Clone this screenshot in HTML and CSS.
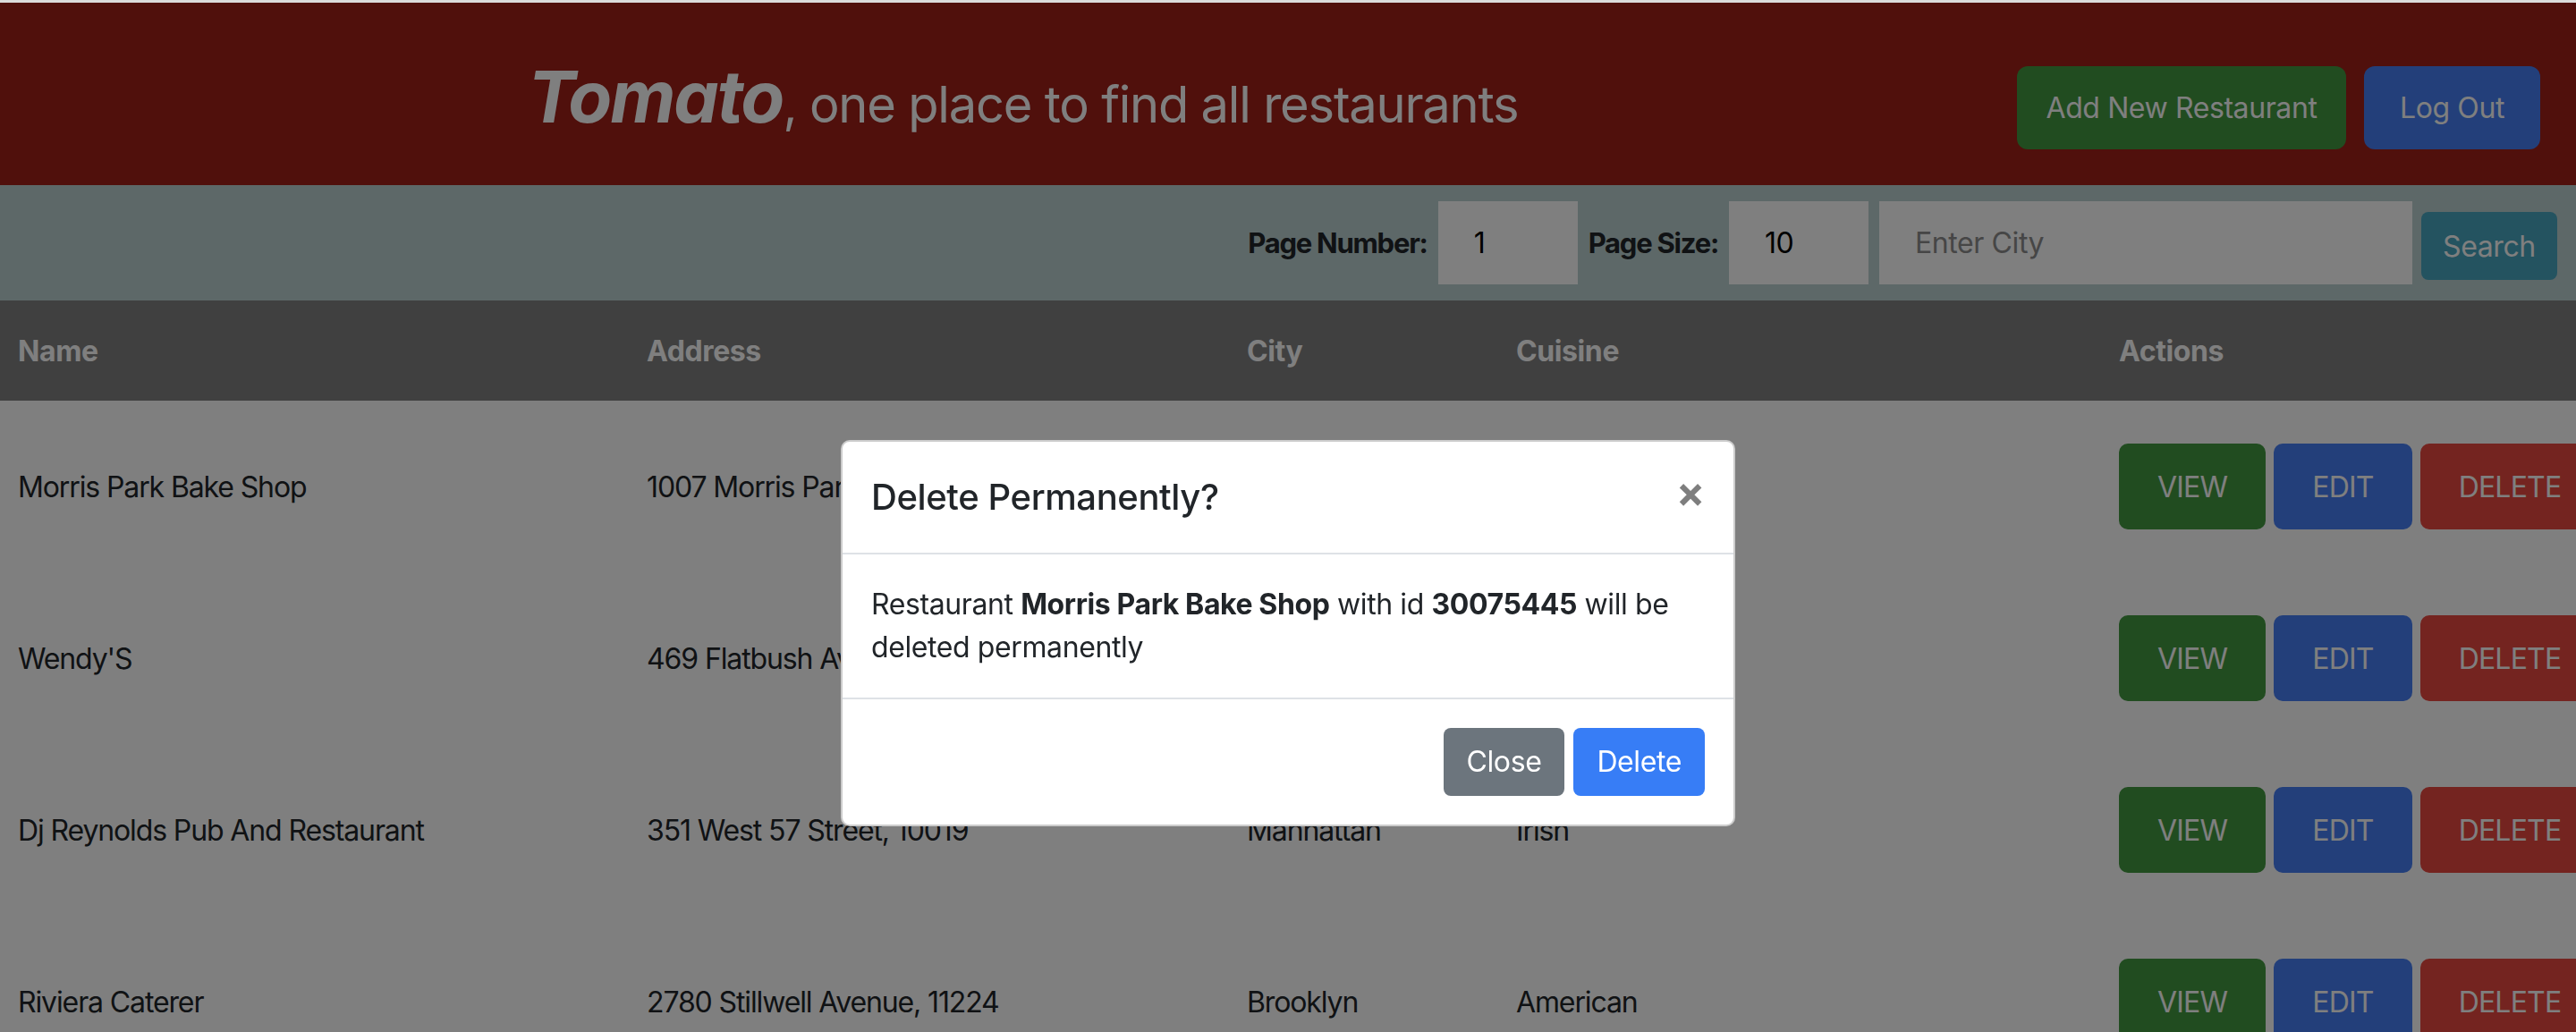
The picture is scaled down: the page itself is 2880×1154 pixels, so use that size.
FILE: index.html
```html
<!DOCTYPE html>
<html lang="en">
<head>
<meta charset="utf-8">
<title>Tomato</title>
<link rel="stylesheet" href="styles.css">
</head>
<body>
<div class="chrome-strip"></div>
<header class="app-header">
  <h1 class="brand"><span class="brand-name">Tomato</span><span class="brand-tag">, one place to find all restaurants</span></h1>
  <div class="header-actions">
    <button class="hbtn hbtn-add">Add New Restaurant</button>
    <button class="hbtn hbtn-logout">Log Out</button>
  </div>
</header>
<form class="filter-bar">
  <label class="filter-label">Page Number:</label>
  <input class="filter-input filter-small" type="text" value="1">
  <label class="filter-label">Page Size:</label>
  <input class="filter-input filter-small" type="text" value="10">
  <input class="filter-input filter-city" type="text" placeholder="Enter City">
  <button type="button" class="search-btn">Search</button>
</form>
<table class="rest-table">
  <colgroup>
    <col class="col-name"><col class="col-address"><col class="col-city"><col class="col-cuisine"><col class="col-actions">
  </colgroup>
  <thead>
    <tr><th>Name</th><th>Address</th><th>City</th><th>Cuisine</th><th>Actions</th></tr>
  </thead>
  <tbody>
    <tr>
      <td>Morris Park Bake Shop</td><td>1007 Morris Park Ave, 10462</td><td>Bronx</td><td>Bakery</td>
      <td><div class="actions"><button class="rbtn rbtn-view">View</button><button class="rbtn rbtn-edit">Edit</button><button class="rbtn rbtn-delete">Delete</button></div></td>
    </tr>
    <tr>
      <td>Wendy'S</td><td>469 Flatbush Avenue, 11225</td><td>Brooklyn</td><td>Hamburgers</td>
      <td><div class="actions"><button class="rbtn rbtn-view">View</button><button class="rbtn rbtn-edit">Edit</button><button class="rbtn rbtn-delete">Delete</button></div></td>
    </tr>
    <tr>
      <td>Dj Reynolds Pub And Restaurant</td><td>351 West 57 Street, 10019</td><td>Manhattan</td><td>Irish</td>
      <td><div class="actions"><button class="rbtn rbtn-view">View</button><button class="rbtn rbtn-edit">Edit</button><button class="rbtn rbtn-delete">Delete</button></div></td>
    </tr>
    <tr>
      <td>Riviera Caterer</td><td>2780 Stillwell Avenue, 11224</td><td>Brooklyn</td><td>American</td>
      <td><div class="actions"><button class="rbtn rbtn-view">View</button><button class="rbtn rbtn-edit">Edit</button><button class="rbtn rbtn-delete">Delete</button></div></td>
    </tr>
  </tbody>
</table>

<div class="backdrop"></div>
<div class="modal">
  <div class="modal-content">
    <div class="modal-header">
      <h5 class="modal-title">Delete Permanently?</h5>
      <button class="modal-close" aria-label="Close">×</button>
    </div>
    <div class="modal-body">Restaurant <b>Morris Park Bake Shop</b> with id <b>30075445</b> will be deleted permanently</div>
    <div class="modal-footer">
      <button class="mbtn mbtn-secondary">Close</button>
      <button class="mbtn mbtn-primary">Delete</button>
    </div>
  </div>
</div>
</body>
</html>
```
FILE: styles.css
```css
* { box-sizing: border-box; }
html, body { margin: 0; padding: 0; }
body {
  font-family: Inter, "Noto Sans", "Liberation Sans", sans-serif;
  letter-spacing: -0.025em;
  color: #212529;
  background: #fff;
  overflow: hidden;
  width: 2880px;
  height: 1154px;
}
button, input { font-family: inherit; letter-spacing: inherit; }

.chrome-strip { height: 3px; background: #dcdcdc; }

.app-header {
  height: 204px;
  background: #a02018;
  display: flex;
  align-items: center;
  padding: 0 40px 0 590px;
}
.brand {
  margin: 24px 0 0;
  color: #fff;
  line-height: 96px;
  font-weight: 400;
  white-space: nowrap;
}
.brand-name { font-size: 80px; font-weight: 700; font-style: italic; letter-spacing: -2px; }
.brand-tag { font-size: 56px; letter-spacing: -1.2px; }
.header-actions { margin-left: auto; margin-top: 30px; display: flex; gap: 20px; }
.hbtn {
  height: 93px;
  border: 0;
  border-radius: 12px;
  color: #fff;
  font-size: 32px;
  padding: 0;
}
.hbtn-add { background: #429840; width: 368px; }
.hbtn-logout { background: #467ef4; width: 197px; }

.filter-bar {
  height: 129px;
  margin: 0;
  background: #bad0d0;
  display: flex;
  justify-content: flex-end;
  align-items: center;
  gap: 12px;
  padding-right: 21px;
}
.filter-label { font-weight: 700; font-size: 31px; letter-spacing: -0.04em; color: #212529; }
.filter-input {
  height: 93px;
  border: 0;
  background: #fff;
  padding: 0 0 0 40px;
  font-size: 32px;
  color: #000;
  outline: none;
}
.filter-input::placeholder { color: #8c8c8c; }
.filter-small { width: 156px; }
.filter-city { width: 596px; }
.search-btn {
  margin-left: -2px;
  margin-top: 7px;
  width: 152px;
  height: 76px;
  border: 0;
  border-radius: 8px;
  background: #48a6c0;
  color: #fff;
  font-size: 32px;
}

.rest-table { border-collapse: collapse; table-layout: fixed; width: 2920px; }
.col-name { width: 703px; }
.col-address { width: 671px; }
.col-city { width: 301px; }
.col-cuisine { width: 674px; }
.col-actions { width: 571px; }
.rest-table th {
  background: #808080;
  color: #fff;
  font-weight: 700;
  font-size: 32px;
  height: 112px;
  text-align: left;
  padding: 0 20px;
}
.rest-table td {
  height: 192px;
  padding: 0 20px;
  font-size: 32px;
  letter-spacing: -0.035em;
  vertical-align: middle;
  white-space: nowrap;
}
.actions { display: flex; gap: 9px; }
.rbtn {
  height: 96px;
  padding: 0 43px;
  border: 0;
  border-radius: 10px;
  color: #fff;
  font-size: 32px;
  letter-spacing: -0.025em;
  text-transform: uppercase;
}
.rbtn-view { background: #429840; }
.rbtn-edit { background: #467ef4; }
.rbtn-delete { background: #e84840; }

.backdrop {
  position: fixed;
  top: 3px; left: 0; right: 0; bottom: 0;
  background: rgba(0, 0, 0, 0.5);
}
.modal {
  position: fixed;
  top: 0; left: 0; right: 0; bottom: 0;
  display: flex;
  justify-content: center;
  align-items: flex-start;
  padding-top: 492px;
}
.modal-content {
  width: 1000px;
  background: #fff;
  border: 2px solid rgba(0, 0, 0, 0.2);
  border-radius: 10px;
}
.modal-header {
  display: flex;
  align-items: flex-start;
  padding: 32px;
  border-bottom: 2px solid #dee2e6;
}
.modal-title { margin: 0; font-size: 40px; font-weight: 500; line-height: 60px; color: #212529; }
.modal-close {
  margin: -32px -32px -32px auto;
  padding: 32px;
  border: 0;
  background: transparent;
  font-size: 48px;
  font-weight: 700;
  line-height: 48px;
  color: #000;
  opacity: 0.5;
}
.modal-body { padding: 32px; font-size: 32px; line-height: 48px; color: #212529; }
.modal-body b { font-weight: 700; }
.modal-footer {
  display: flex;
  justify-content: flex-end;
  gap: 10px;
  padding: 32px;
  border-top: 2px solid #dee2e6;
}
.mbtn {
  padding: 12px 24px;
  font-size: 32px;
  line-height: 48px;
  border: 2px solid transparent;
  border-radius: 8px;
  color: #fff;
}
.mbtn-secondary { background: #6c757d; }
.mbtn-primary { background: #377df6; }
```
